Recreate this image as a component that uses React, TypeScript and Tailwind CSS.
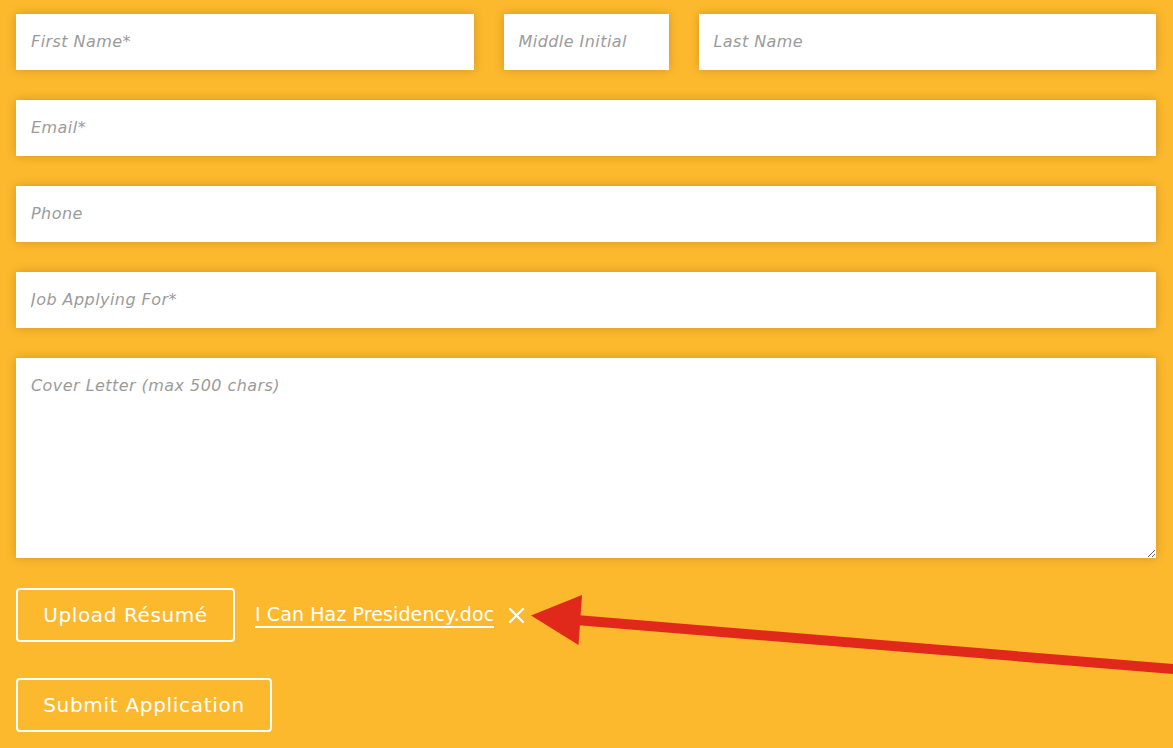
import React from "react";

const inputCls =
  "h-[56px] w-full bg-white px-[15px] pb-[2px] text-[16px] tracking-[0.45px] italic text-[#555] placeholder:text-[#9b9b9b] outline-none shadow-[0_0_10px_rgba(0,0,0,0.18)] border-0";

export default function App() {
  return (
    <div
      className="relative min-h-[748px] w-full overflow-hidden bg-[#fdb92d] pl-[16px] pr-[17px] pt-[14px]"
      style={{ fontFamily: '"DejaVu Sans", Verdana, sans-serif' }}
    >
      <div className="flex flex-col gap-[30px]">
        <div className="grid grid-cols-[1fr_165px_1fr] gap-[30px]">
          <input className={inputCls} placeholder="First Name*" />
          <input className={inputCls} placeholder="Middle Initial" />
          <input className={inputCls} placeholder="Last Name" />
        </div>
        <input className={inputCls} placeholder="Email*" />
        <input className={inputCls} placeholder="Phone" />
        <input className={inputCls} placeholder="Job Applying For*" />
        <textarea
          className="block h-[200px] w-full bg-white px-[15px] pt-[17px] text-[16px] tracking-[0.45px] italic leading-[22px] text-[#555] placeholder:text-[#9b9b9b] outline-none shadow-[0_0_10px_rgba(0,0,0,0.18)]"
          placeholder="Cover Letter (max 500 chars)"
        />
        <div className="flex items-center">
          <button className="flex h-[54px] w-[219px] items-center justify-center rounded-[4px] border-2 border-white text-[20px] tracking-[0.6px] text-white">
            Upload Résumé
          </button>
          <span className="ml-[20px] border-b-2 border-white pb-[1px] text-[19px] leading-[22px] tracking-[0.1px] text-white">
            I Can Haz Presidency.doc
          </span>
          <svg className="ml-[14px]" width="17" height="17" viewBox="0 0 17 17">
            <path d="M2 2 L15 15 M15 2 L2 15" stroke="white" strokeWidth="2.2" strokeLinecap="round" />
          </svg>
        </div>
      </div>
      <div className="mt-[36px]">
        <button className="flex h-[54px] w-[256px] items-center justify-center rounded-[4px] border-2 border-white text-[20px] tracking-[0.7px] text-white">
          Submit Application
        </button>
      </div>

      <svg
        className="pointer-events-none absolute left-0 top-0"
        width="1173"
        height="748"
        viewBox="0 0 1173 748"
      >
        <line x1="570" y1="619.5" x2="1190" y2="670.5" stroke="#e0281b" strokeWidth="10" />
        <polygon points="531,615.5 582,595 578.5,645" fill="#e0281b" />
      </svg>
    </div>
  );
}
